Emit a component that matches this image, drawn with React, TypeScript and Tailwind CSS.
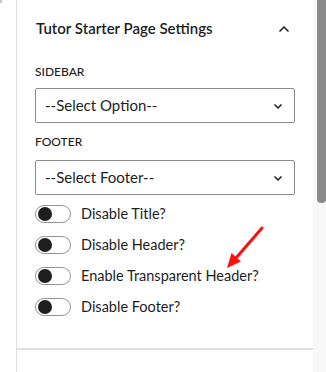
import React from 'react';

const toggles = ['Disable Title?', 'Disable Header?', 'Enable Transparent Header?', 'Disable Footer?'];

const Chevron = ({ up }: { up?: boolean }) => (
    <svg width="12" height="8" viewBox="0 0 12 8" fill="none">
        <path
            d={up ? 'M1.5 6.5 L6 2 L10.5 6.5' : 'M2.5 2.5 L6 6 L9.5 2.5'}
            stroke="#1e1e1e"
            strokeWidth="1.5"
        />
    </svg>
);

const SelectBox = ({ value }: { value: string }) => (
    <div className="flex h-[35px] w-[260px] items-center justify-between rounded-[2px] border border-[#8c8c8c] bg-white pl-[9px] pr-[10px]">
        <span className="text-[15px] text-[#1e1e1e]">{value}</span>
        <Chevron />
    </div>
);

const Toggle = ({ label }: { label: string }) => (
    <div className="flex h-[18px] items-center gap-[10px]">
        <div className="flex h-[18px] w-[36px] items-center rounded-full border border-[#949494] bg-white pl-[2px]">
            <div className="h-[14px] w-[14px] rounded-full bg-[#1e1e1e]" />
        </div>
        <span className="text-[14.5px] text-[#1e1e1e]">{label}</span>
    </div>
);

export default function App() {
    return (
        <div
            className="relative flex h-[372px] w-[326px] overflow-hidden bg-white"
            style={{ fontFamily: 'Lato, "Noto Sans", sans-serif' }}
        >
            {/* Left gutter */}
            <div className="w-[16px]">
                <div className="h-[3px] w-[2px] bg-[#c8c8c8]" />
            </div>

            {/* Settings panel */}
            <div className="flex w-[297px] flex-col border-l border-[#dddddd]">
                <div className="flex h-[56px] items-center justify-between pl-[19px] pr-[23px] pt-[1px]">
                    <span className="text-[15px] font-semibold text-[#1e1e1e]">Tutor Starter Page Settings</span>
                    <Chevron up />
                </div>

                <div className="flex flex-col px-[18px]">
                    <span className="mt-[8px] text-[12px] font-medium uppercase leading-[16px] text-[#1e1e1e]">Sidebar</span>
                    <div className="mt-[8px]">
                        <SelectBox value="--Select Option--" />
                    </div>
                    <span className="mt-[11px] text-[12px] font-medium uppercase leading-[16px] text-[#1e1e1e]">Footer</span>
                    <div className="mt-[10px]">
                        <SelectBox value="--Select Footer--" />
                    </div>
                    <div className="mt-[10px] flex flex-col gap-[13px]">
                        {toggles.map((t) => (
                            <Toggle key={t} label={t} />
                        ))}
                    </div>
                </div>

                <div className="mt-auto mb-[22px] h-[2px] bg-[#e0e0e0]" />
            </div>

            {/* Scrollbar */}
            <div className="flex w-[13px] justify-end bg-[#f8f8f8]">
                <div className="h-[203px] w-[9px] rounded-b-[4px] bg-[#8a8a8a]" />
            </div>

            {/* Annotation arrow */}
            <svg className="pointer-events-none absolute left-0 top-0" width="326" height="372">
                <line x1="262" y1="228" x2="236" y2="258" stroke="#ff1010" strokeWidth="3" strokeLinecap="round" />
                <polygon points="227,268 241,261.5 231.5,253" fill="#ff1010" />
            </svg>
        </div>
    );
}
